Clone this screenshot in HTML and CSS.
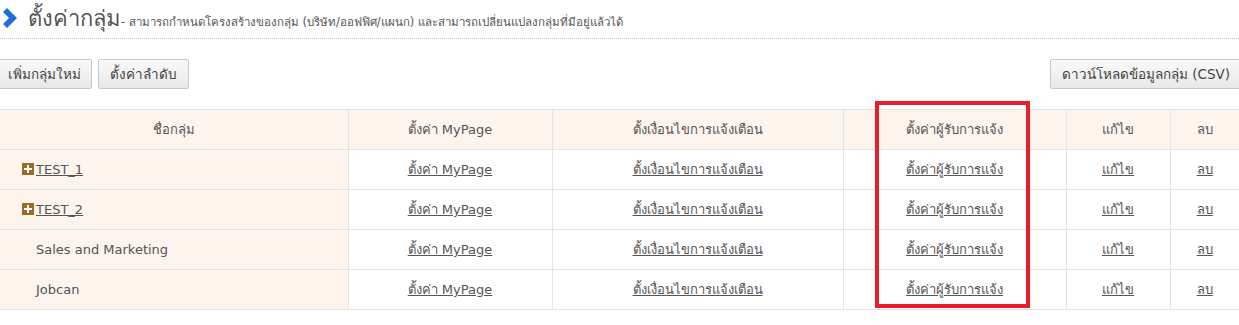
FILE: index.html
```html
<!DOCTYPE html>
<html lang="th">
<head>
<meta charset="utf-8">
<link rel="stylesheet" href="styles.css">
</head>
<body>
<div class="page">
  <div class="title-bar">
    <svg class="chev" width="15" height="20" viewBox="0 0 15 20"><path d="M0 4 L4 0 L14 10 L4 20 L0 16 L6 10 Z" fill="#1f6fd6"/></svg>
    <h1 class="title">ตั้งค่ากลุ่ม</h1>
    <span class="subtitle">- สามารถกำหนดโครงสร้างของกลุ่ม (บริษัท/ออฟฟิศ/แผนก) และสามารถเปลี่ยนแปลงกลุ่มที่มีอยู่แล้วได้</span>
  </div>
  <div class="toolbar">
    <div class="btns">
      <button class="btn btn-first">เพิ่มกลุ่มใหม่</button>
      <button class="btn">ตั้งค่าลำดับ</button>
    </div>
    <button class="btn btn-csv">ดาวน์โหลดข้อมูลกลุ่ม (CSV)</button>
  </div>
  <div class="table-wrap">
    <table class="grid">
      <colgroup>
        <col class="c1"><col class="c2"><col class="c3"><col class="c4"><col class="c5"><col class="c6">
      </colgroup>
      <thead>
        <tr>
          <th class="name-col">ชื่อกลุ่ม</th>
          <th>ตั้งค่า MyPage</th>
          <th>ตั้งเงื่อนไขการแจ้งเตือน</th>
          <th>ตั้งค่าผู้รับการแจ้ง</th>
          <th>แก้ไข</th>
          <th>ลบ</th>
        </tr>
      </thead>
      <tbody>
        <tr>
          <td class="name-col"><span class="plus"></span><a href="#">TEST_1</a></td>
          <td><a href="#">ตั้งค่า MyPage</a></td>
          <td><a href="#">ตั้งเงื่อนไขการแจ้งเตือน</a></td>
          <td><a href="#">ตั้งค่าผู้รับการแจ้ง</a></td>
          <td><a href="#">แก้ไข</a></td>
          <td><a href="#">ลบ</a></td>
        </tr>
        <tr>
          <td class="name-col"><span class="plus"></span><a href="#">TEST_2</a></td>
          <td><a href="#">ตั้งค่า MyPage</a></td>
          <td><a href="#">ตั้งเงื่อนไขการแจ้งเตือน</a></td>
          <td><a href="#">ตั้งค่าผู้รับการแจ้ง</a></td>
          <td><a href="#">แก้ไข</a></td>
          <td><a href="#">ลบ</a></td>
        </tr>
        <tr>
          <td class="name-col"><span class="indent">Sales and Marketing</span></td>
          <td><a href="#">ตั้งค่า MyPage</a></td>
          <td><a href="#">ตั้งเงื่อนไขการแจ้งเตือน</a></td>
          <td><a href="#">ตั้งค่าผู้รับการแจ้ง</a></td>
          <td><a href="#">แก้ไข</a></td>
          <td><a href="#">ลบ</a></td>
        </tr>
        <tr>
          <td class="name-col"><span class="indent">Jobcan</span></td>
          <td><a href="#">ตั้งค่า MyPage</a></td>
          <td><a href="#">ตั้งเงื่อนไขการแจ้งเตือน</a></td>
          <td><a href="#">ตั้งค่าผู้รับการแจ้ง</a></td>
          <td><a href="#">แก้ไข</a></td>
          <td><a href="#">ลบ</a></td>
        </tr>
      </tbody>
    </table>
    <div class="highlight"></div>
  </div>
</div>
</body>
</html>
```

FILE: styles.css
```css
html, body {
  margin: 0;
  padding: 0;
  background: #fff;
}
body {
  font-family: Tahoma, "DejaVu Sans", "Noto Sans", sans-serif;
  color: #555;
  font-size: 13px;
}
.page {
  width: 1239px;
}
.title-bar {
  display: flex;
  align-items: baseline;
  height: 39px;
  border-bottom: 1px dotted #c8c8c8;
  box-sizing: border-box;
  padding-left: 3px;
}
.chev {
  align-self: flex-start;
  margin-top: 8px;
  margin-right: 10px;
}
.title {
  margin: 0;
  font-size: 22px;
  font-weight: normal;
  color: #555;
  line-height: 38px;
}
.subtitle {
  font-size: 11.5px;
  color: #555;
}
.toolbar {
  display: flex;
  justify-content: space-between;
  padding-top: 20px;
  height: 70px;
  box-sizing: border-box;
}
.btns {
  display: flex;
  gap: 6px;
}
.btn {
  font-family: inherit;
  font-size: 13.5px;
  color: #444;
  height: 30px;
  padding: 0 11px;
  border: 1px solid #c8c8c8;
  border-radius: 2px;
  background: linear-gradient(#fafafa, #e8e8e8);
  cursor: pointer;
}
.btn-first {
  margin-left: -1px;
  padding: 0 10px 0 8px;
}
.btn-csv {
  margin-right: -3px;
}
.table-wrap {
  position: relative;
}
.grid {
  width: 1239px;
  border-collapse: collapse;
  table-layout: fixed;
}
.c1 { width: 348px; }
.c2 { width: 204px; }
.c3 { width: 291px; }
.c4 { width: 223px; }
.c5 { width: 104px; }
.c6 { width: 69px; }
.grid th, .grid td {
  height: 39px;
  padding: 0;
  border: 1px solid #e6e3e0;
  text-align: center;
  font-weight: normal;
  font-size: 13px;
  color: #555;
}
.grid tr > :first-child { border-left: none; }
.grid tr > :last-child { border-right: none; }
.grid thead th {
  background: #fdf4ee;
}
.grid td.name-col {
  background: #fdf4ee;
  text-align: left;
  padding-left: 22px;
}
.grid a {
  color: #555;
  text-decoration: underline;
}
.plus {
  display: inline-block;
  width: 12px;
  height: 12px;
  background: #9a6a28;
  position: relative;
  vertical-align: -1px;
  margin-right: 2px;
}
.plus::before, .plus::after {
  content: "";
  position: absolute;
  background: #fff;
}
.plus::before {
  left: 2px; top: 5px; width: 8px; height: 2px;
}
.plus::after {
  left: 5px; top: 2px; width: 2px; height: 8px;
}
.indent {
  padding-left: 14px;
}
.highlight {
  position: absolute;
  left: 875px;
  top: -8px;
  width: 155px;
  height: 207px;
  border: 4.5px solid #e81f2a;
  box-sizing: border-box;
  pointer-events: none;
}
```
